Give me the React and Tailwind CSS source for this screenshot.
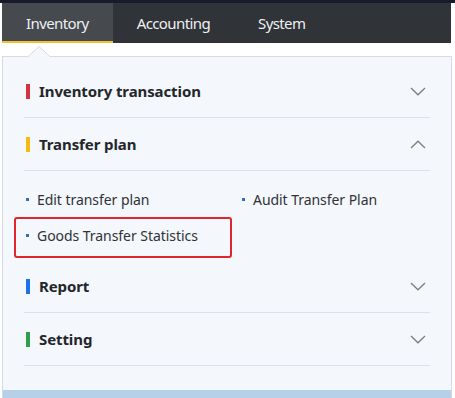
import React from "react";

const Chevron = ({ up }) => (
  <svg width="16" height="9" viewBox="0 0 16 9" className="mr-[4px]">
    <polyline
      points={up ? "1,8 8,1.2 15,8" : "1,1 8,7.8 15,1"}
      fill="none"
      stroke="#7a7f86"
      strokeWidth="1.3"
    />
  </svg>
);

const Heading = ({ color, title, up }) => (
  <div className="flex items-center h-[53px] border-b border-[#dbe1e8]">
    <div className={`w-[4px] h-[15px] ml-[2px] mr-[9px] ${color}`} />
    <div className="flex-1 text-[15px] font-bold text-[#23262b] tracking-[-0.1px]">{title}</div>
    <Chevron up={up} />
  </div>
);

const Item = ({ children }) => (
  <div className="flex items-center h-[36px] text-[14px] text-[#2f3338] tracking-[-0.05px]">
    <div className="w-[3px] h-[3px] bg-[#2f6fbf] ml-[2px] mr-[8px]" />
    {children}
  </div>
);

export default function App() {
  return (
    <div
      className="w-[455px] h-[398px] bg-white overflow-hidden relative"
      style={{ fontFamily: '"Noto Sans", "Open Sans", sans-serif' }}
    >
      <div className="h-[3px] bg-[#171b2b]" />
      <div className="ml-[2px] w-[449px] h-[40px] flex bg-[#303338] text-[15px] tracking-[-0.6px] text-[#eef0f2]">
        <div className="px-[24px] flex items-center bg-[#46494e] border-b-[2px] border-[#f2c12e] pt-[2px]">
          Inventory
        </div>
        <div className="px-[24px] flex items-center">Accounting</div>
        <div className="px-[24px] flex items-center">System</div>
      </div>
      <div className="h-[13px]" />
      <div className="ml-[2px] w-[450px] border border-[#d3dbe4] bg-[#f4f7fb] relative">
        <svg
          width="24"
          height="12"
          viewBox="0 0 24 12"
          className="absolute left-[24px] top-[-11px]"
        >
          <polygon points="0,11.5 12,0.5 24,11.5" fill="#f4f7fb" stroke="#d3dbe4" strokeWidth="1" />
          <rect x="0" y="11" width="24" height="2" fill="#f4f7fb" />
        </svg>
        <div className="px-[21px] pt-[8px] pb-[24px]">
          <Heading color="bg-[#d5333f]" title="Inventory transaction" />
          <Heading color="bg-[#f5b90f]" title="Transfer plan" up />
          <div className="pt-[10px] pb-[7px] grid grid-cols-[216px_1fr]">
            <Item>Edit transfer plan</Item>
            <Item>Audit Transfer Plan</Item>
            <div className="relative">
              <Item>Goods Transfer Statistics</Item>
              <div className="absolute left-[-10px] top-[0px] w-[218px] h-[41px] border-[2.5px] border-[#e0262a] rounded-[3px]" />
            </div>
          </div>
          <Heading color="bg-[#1a73e8]" title="Report" />
          <Heading color="bg-[#2e9e4a]" title="Setting" />
        </div>
        <div className="h-[10px] bg-[#b6d1e7]" />
      </div>
    </div>
  );
}
